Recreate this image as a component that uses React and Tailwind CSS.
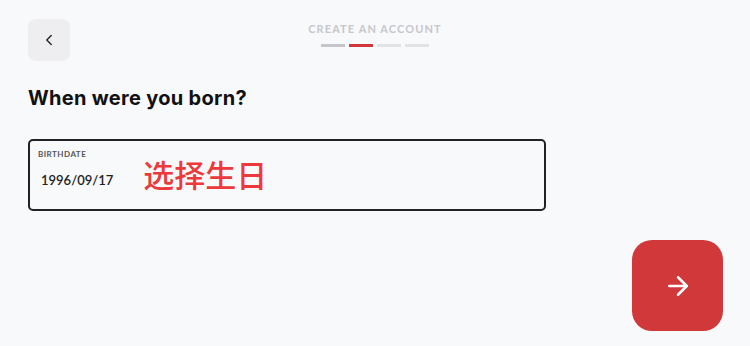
import { ChevronLeft, ArrowRight } from "lucide-react";

function App() {
  const steps = ["bg-[#c4c6ca]", "bg-[#d0383a]", "bg-[#e2e3e5]", "bg-[#e2e3e5]"];

  return (
    <div className="w-[750px] h-[346px] bg-[#f8f9fb] overflow-hidden font-['Lato',sans-serif] text-[#111]">
      {/* HEADER */}
      <div className="relative h-[80px]">
        <button className="absolute left-[28px] top-[19px] w-[42px] h-[42px] rounded-lg bg-[#eeeef0] flex items-center justify-center">
          <ChevronLeft size={18} strokeWidth={1.8} className="text-[#222]" />
        </button>
        <div className="flex flex-col items-center pt-[22px]">
          <span className="text-[11px] font-bold tracking-[0.1em] text-[#c6c7cb] leading-[13px]">
            CREATE AN ACCOUNT
          </span>
          <div className="mt-[9px] flex gap-[4px]">
            {steps.map((c, i) => (
              <div key={i} className={`w-[24px] h-[3px] ${c}`} />
            ))}
          </div>
        </div>
      </div>

      {/* QUESTION */}
      <div className="px-[28px]">
        <h1 className="mt-[5px] text-[20px] font-bold leading-[26px] font-['Inter',sans-serif] tracking-[0.015em]">
          When were you born?
        </h1>

        <div className="mt-[28px] w-[518px] h-[72px] border-2 border-[#222] rounded-[5px] px-[8px] pt-[8px]">
          <p className="text-[8px] font-bold tracking-[0.06em] text-[#555] leading-[10px]">
            BIRTHDATE
          </p>
          <div className="flex items-start">
            <span className="ml-[3px] mt-[13px] text-[13px] font-semibold text-[#222] leading-[16px]">
              1996/09/17
            </span>
            <span className="ml-[30px] -mt-[2px] text-[31px] leading-[34px] text-[#ec3a3c] font-['Noto_Sans_CJK_SC',sans-serif] font-medium">
              选择生日
            </span>
          </div>
        </div>
      </div>

      {/* NEXT */}
      <div className="flex justify-end pr-[27px] mt-[29px]">
        <button className="w-[91px] h-[91px] rounded-[20px] bg-[#d1383a] flex items-center justify-center">
          <ArrowRight size={30} strokeWidth={2} className="text-white" />
        </button>
      </div>
    </div>
  );
}

export default App;
